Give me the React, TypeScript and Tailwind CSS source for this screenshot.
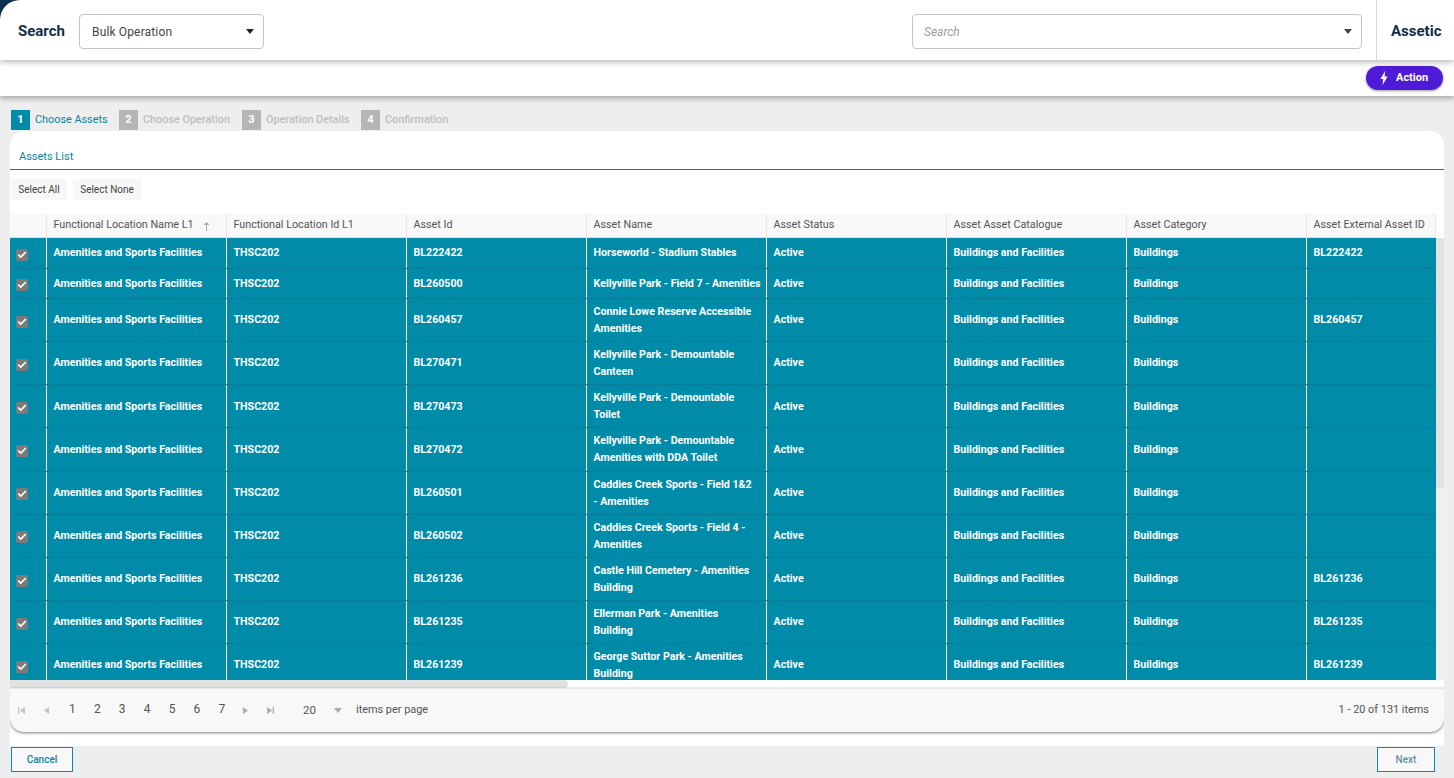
import { Check } from "lucide-react"

const rows = [
  { id: "BL222422", name: ["Horseworld - Stadium Stables"], ext: "BL222422", h: "h-[30.5px]", pt: "pt-[6px]", box: "mt-[-4px]" },
  { id: "BL260500", name: ["Kellyville Park - Field 7 - Amenities"], ext: "", h: "h-[30.5px]", pt: "pt-[6px]", box: "mt-[-4.5px]" },
  { id: "BL260457", name: ["Connie Lowe Reserve Accessible", "Amenities"], ext: "BL260457", h: "h-[43.17px]", pt: "pt-[12px]", box: "mt-[-4.5px]" },
  { id: "BL270471", name: ["Kellyville Park - Demountable", "Canteen"], ext: "", h: "h-[43.17px]", pt: "pt-[12px]", box: "mt-[-4.5px]" },
  { id: "BL270473", name: ["Kellyville Park - Demountable", "Toilet"], ext: "", h: "h-[43.17px]", pt: "pt-[12.5px]", box: "mt-[-4.5px]" },
  { id: "BL270472", name: ["Kellyville Park - Demountable", "Amenities with DDA Toilet"], ext: "", h: "h-[43.17px]", pt: "pt-[12.5px]", box: "mt-[-4.5px]" },
  { id: "BL260501", name: ["Caddies Creek Sports - Field 1&2", "- Amenities"], ext: "", h: "h-[43.17px]", pt: "pt-[12px]", box: "mt-[-4.5px]" },
  { id: "BL260502", name: ["Caddies Creek Sports - Field 4 -", "Amenities"], ext: "", h: "h-[43.17px]", pt: "pt-[12px]", box: "mt-[-4.5px]" },
  { id: "BL261236", name: ["Castle Hill Cemetery - Amenities", "Building"], ext: "BL261236", h: "h-[43.17px]", pt: "pt-[12px]", box: "mt-[-4.5px]" },
  { id: "BL261235", name: ["Ellerman Park - Amenities", "Building"], ext: "BL261235", h: "h-[43.17px]", pt: "pt-[12px]", box: "mt-[-4.5px]" },
  { id: "BL261239", name: ["George Suttor Park - Amenities", "Building"], ext: "BL261239", h: "h-[43.17px]", pt: "pt-[12px]", box: "mt-[-4.5px]" },
]

const headers = [
  "Functional Location Name L1",
  "Functional Location Id L1",
  "Asset Id",
  "Asset Name",
  "Asset Status",
  "Asset Asset Catalogue",
  "Asset Category",
  "Asset External Asset ID",
]

const steps = [
  { n: 1, label: "Choose Assets", left: "left-[1px]", textLeft: "left-[25px]", on: true },
  { n: 2, label: "Choose Operation", left: "left-[109px]", textLeft: "left-[133px]", on: false },
  { n: 3, label: "Operation Details", left: "left-[232px]", textLeft: "left-[256px]", on: false },
  { n: 4, label: "Confirmation", left: "left-[351px]", textLeft: "left-[375px]", on: false },
]

function Caret({ className }: { className: string }) {
  return (
    <svg viewBox="0 0 8 5" className={className}>
      <path d="M0 0h8L4 5z" fill="currentColor" />
    </svg>
  )
}

function PagerIcon({ className, d }: { className: string; d: string }) {
  return (
    <svg viewBox="0 0 8 8" className={className}>
      <path d={d} fill="currentColor" />
    </svg>
  )
}

function Cell({ children, className = "" }: { children?: React.ReactNode; className?: string }) {
  return <div className={`shrink-0 border-r border-white pl-[6.5px] ${className}`}>{children}</div>
}

export default function App() {
  return (
    <div className="relative h-[778px] w-[1454px] overflow-hidden bg-[#eeeeee] [font-family:Roboto,sans-serif] text-[11px] text-[#4a4a4a]">
      {/* second bar sits under the header shadow */}
      <div className="absolute left-0 top-[60px] h-[36px] w-full bg-white shadow-[0_2px_6px_rgba(0,0,0,0.35)]">
        <button className="absolute left-[1366px] top-[6px] h-[24px] w-[77px] rounded-full bg-[#4f1bd6] text-white shadow-[0_1px_3px_rgba(0,0,0,0.4)]">
          <svg viewBox="0 0 8 14" className="absolute left-[14px] top-[5px] h-[14px] w-[8px]">
            <path d="M5 0L0.5 8H3.2L2.6 14L7.6 5.6H4.6z" fill="white" />
          </svg>
          <span className="absolute left-[30px] top-[5px] text-[11px] font-bold leading-[13px]">Action</span>
        </button>
      </div>

      <div className="absolute left-0 top-0 h-[24px] w-[24px] bg-[#0f3250]" />
      <header className="absolute left-0 top-0 h-[60px] w-full rounded-tl-[20px] bg-white shadow-[0_2px_6px_rgba(0,0,0,0.3)]">
        <span className="absolute left-[18px] top-[22px] text-[15px] font-bold leading-[19px] text-[#10304a]">Search</span>
        <div className="absolute left-[79px] top-[14px] flex h-[35px] w-[185px] items-center justify-between rounded-[4px] border border-[#c4c4c8] bg-white pl-[12px] pr-[9px] text-[12px] tracking-[0.15px] text-[#444]">
          Bulk Operation
          <Caret className="h-[5px] w-[8px] text-[#222]" />
        </div>
        <div className="absolute left-[912px] top-[14px] flex h-[35px] w-[450px] items-center justify-between rounded-[4px] border border-[#c4c4c8] bg-white pl-[11px] pr-[9px] text-[12px] italic text-[#a0a0a0]">
          Search
          <Caret className="h-[5px] w-[8px] text-[#444]" />
        </div>
        <div className="absolute left-[1376px] top-0 h-[60px] w-px bg-[#d8d8d8]" />
        <span className="absolute left-[1391px] top-[22px] text-[15px] font-bold leading-[18px] text-[#10304a]">Assetic</span>
      </header>

      <div className="absolute left-[10px] top-[108px] h-[23px] w-[1434px]">
        {steps.map((s) => (
          <div key={s.n}>
            <div
              className={`absolute top-[2px] flex h-[20px] w-[19px] items-center justify-center text-[11px] font-bold text-white ${s.left} ${
                s.on ? "bg-[#008ba8]" : "bg-[#b5b5b5]"
              }`}
            >
              {s.n}
            </div>
            <span
              className={`absolute top-[5px] whitespace-nowrap text-[10.85px] leading-[14px] ${s.textLeft} ${
                s.on ? "text-[#0a84a0]" : "font-medium text-[#bdbdbd]"
              }`}
            >
              {s.label}
            </span>
          </div>
        ))}
      </div>

      <main className="absolute left-[10px] top-[131px] h-[615px] w-[1434px] overflow-hidden rounded-t-[14px] bg-white">
        <div className="h-[39px] border-b border-[#0f7f97] pl-[9px] pt-[19px] text-[11px] leading-[14px] text-[#0a84a0]">Assets List</div>

        <div className="absolute left-[1px] top-[48px] flex gap-[6px] text-[10px] leading-[21px] text-[#444]">
          <div className="h-[21px] w-[56px] bg-[#f7f7f7] text-center">Select All</div>
          <div className="h-[21px] w-[68px] bg-[#f7f7f7] text-center">Select None</div>
        </div>

        <div className="absolute left-0 top-[83px] flex h-[24px] w-[1426px] border-b border-[#e2e2e2] bg-[#f8f8f8] font-normal text-[#555]">
          <div className="h-full w-[37px] shrink-0 border-r border-[#e6e6e6]" />
          {headers.map((h, i) => (
            <div
              key={h}
              className={`relative flex h-full shrink-0 items-center border-r border-[#e6e6e6] pl-[6.5px] text-[10.75px] ${
                i === 7 ? "w-[129px]" : "w-[180px]"
              }`}
            >
              {h}
              {i === 0 && (
                <svg viewBox="0 0 7 9" className="absolute left-[156px] top-[8px] h-[9px] w-[7px] text-[#aaa]">
                  <path d="M3.5 0L6.5 3H4V9H3V3H0.5z" fill="currentColor" />
                </svg>
              )}
            </div>
          ))}
        </div>

        <div className="absolute left-0 top-[107px] h-[442px] w-[1426px] overflow-hidden bg-[#008ba8] text-[10.65px] font-bold leading-[17px] text-white">
          {rows.map((r) => (
            <div key={r.id} className={`flex border-b border-[#0a7e98] ${r.h}`}>
              <div className="relative h-full w-[37px] shrink-0 border-r border-white">
                <div className={`absolute left-[6px] top-1/2 flex h-[12px] w-[12px] items-center justify-center rounded-[2px] bg-[#7b7b7b] ${r.box}`}>
                  <Check size={10} strokeWidth={4} className="text-white" />
                </div>
              </div>
              <Cell className={`w-[180px] ${r.pt}`}>Amenities and Sports Facilities</Cell>
              <Cell className={`w-[180px] ${r.pt}`}>THSC202</Cell>
              <Cell className={`w-[180px] ${r.pt}`}>{r.id}</Cell>
              <Cell className={`w-[180px] ${r.name.length > 1 ? "pt-[4px]" : r.pt}`}>
                {r.name.map((line) => (
                  <div key={line} className="whitespace-nowrap">{line}</div>
                ))}
              </Cell>
              <Cell className={`w-[180px] ${r.pt}`}>Active</Cell>
              <Cell className={`w-[180px] ${r.pt}`}>Buildings and Facilities</Cell>
              <Cell className={`w-[180px] ${r.pt}`}>Buildings</Cell>
              <div className={`w-[129px] shrink-0 pl-[6.5px] ${r.pt}`}>{r.ext}</div>
            </div>
          ))}
        </div>

        <div className="absolute left-[1426px] top-[107px] h-[442px] w-[8px] bg-[#efefef]">
          <div className="h-[250px] w-full bg-[#e2e2e2]" />
        </div>
        <div className="absolute left-0 top-[549px] h-[9px] w-[1426px] bg-white">
          <div className="h-[8px] w-[558px] rounded-r-[4px] bg-[#e2e2e2]" />
        </div>

        <div className="absolute left-0 top-[557px] flex h-[44px] w-[1434px] items-center rounded-b-[14px] border-t border-[#e6e6e6] bg-[#f8f8f8] shadow-[0_1px_3px_rgba(0,0,0,0.5)]">
          <PagerIcon d="M0 0H1.5V8H0zM8 0V8L2 4z" className="absolute left-[8px] h-[7px] w-[7px] text-[#c4c4c4]" />
          <PagerIcon d="M7 0V8L1 4z" className="absolute left-[33px] h-[7px] w-[7px] text-[#c4c4c4]" />
          <div className="absolute left-[50px] top-[13px] flex text-[12px] leading-[14px] text-[#555]">
            {[1, 2, 3, 4, 5, 6, 7].map((n) => (
              <span key={n} className="w-[24.9px] text-center">{n}</span>
            ))}
          </div>
          <PagerIcon d="M1 0V8L7 4z" className="absolute left-[232px] h-[7px] w-[7px] text-[#b0b0b0]" />
          <PagerIcon d="M0 0V8L6 4zM6.5 0H8V8H6.5z" className="absolute left-[257px] h-[7px] w-[7px] text-[#b0b0b0]" />
          <span className="absolute left-[293px] top-[14px] text-[11.5px] leading-[14px] text-[#555]">20</span>
          <Caret className="absolute left-[324px] h-[5px] w-[8px] text-[#aaa]" />
          <span className="absolute left-[346px] top-[14px] text-[10.9px] leading-[14px] text-[#555]">items per page</span>
          <span className="absolute right-[15px] top-[14px] text-[10.9px] leading-[14px] text-[#555]">1 - 20 of 131 items</span>
        </div>
      </main>

      <button className="absolute left-[11px] top-[747px] h-[25px] w-[62px] border border-[#0a8aa6] bg-[#f8f8f8] text-[10px] font-medium text-[#0a84a0]">Cancel</button>
      <button className="absolute left-[1377px] top-[747px] h-[25px] w-[58px] border border-[#0a8aa6] bg-[#f8f8f8] text-[10px] font-medium text-[#5f93a3]">Next</button>
    </div>
  )
}
